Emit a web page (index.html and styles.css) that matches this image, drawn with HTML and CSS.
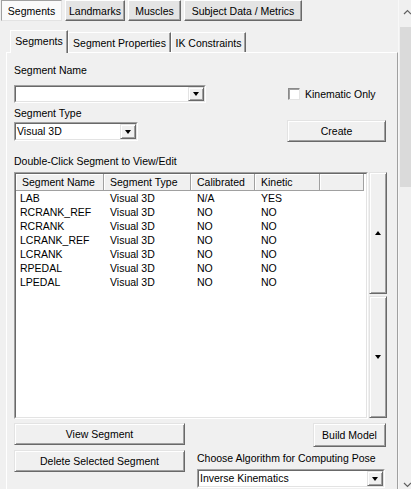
FILE: index.html
```html
<!DOCTYPE html>
<html>
<head>
<meta charset="utf-8">
<link rel="stylesheet" href="styles.css">
</head>
<body>
<div class="window">
  <div class="main">
    <div class="toptabs">
      <div class="ttab sel t1">Segments</div>
      <div class="ttab t2">Landmarks</div>
      <div class="ttab t3">Muscles</div>
      <div class="ttab t4">Subject Data / Metrics</div>
    </div>
    <div class="tabctl">
      <div class="tabstrip">
        <div class="tab sel s1">Segments</div>
        <div class="tab s2">Segment Properties</div>
        <div class="tab s3">IK Constraints</div>
      </div>
      <div class="panel">
        <div class="lbl">Segment Name</div>
        <div class="row1">
          <div class="combo cw1"><div class="combo-in"><span class="ctext"></span><span class="dd"><i class="tri-down"></i></span></div></div>
          <label class="check"><span class="box"></span><span>Kinematic Only</span></label>
        </div>
        <div class="lbl l2">Segment Type</div>
        <div class="row2">
          <div class="combo cw2"><div class="combo-in"><span class="ctext">Visual 3D</span><span class="dd"><i class="tri-down"></i></span></div></div>
          <div class="btn create">Create</div>
        </div>
        <div class="lbl l3">Double-Click Segment to View/Edit</div>
        <div class="listrow">
          <div class="list">
            <div class="list-in">
              <div class="lhead">
                <div class="hc">Segment Name</div>
                <div class="hc">Segment Type</div>
                <div class="hc">Calibrated</div>
                <div class="hc">Kinetic</div>
                <div class="hc"></div>
              </div>
              <div class="lrow"><span>LAB</span><span>Visual 3D</span><span>N/A</span><span>YES</span></div>
              <div class="lrow"><span>RCRANK_REF</span><span>Visual 3D</span><span>NO</span><span>NO</span></div>
              <div class="lrow"><span>RCRANK</span><span>Visual 3D</span><span>NO</span><span>NO</span></div>
              <div class="lrow"><span>LCRANK_REF</span><span>Visual 3D</span><span>NO</span><span>NO</span></div>
              <div class="lrow"><span>LCRANK</span><span>Visual 3D</span><span>NO</span><span>NO</span></div>
              <div class="lrow"><span>RPEDAL</span><span>Visual 3D</span><span>NO</span><span>NO</span></div>
              <div class="lrow"><span>LPEDAL</span><span>Visual 3D</span><span>NO</span><span>NO</span></div>
            </div>
          </div>
          <div class="scrollcol">
            <div class="btn sbtn"><i class="tri-up"></i></div>
            <div class="btn sbtn"><i class="tri-down"></i></div>
          </div>
        </div>
        <div class="bottom">
          <div class="bleft">
            <div class="btn bb">View Segment</div>
            <div class="btn bb">Delete Selected Segment</div>
          </div>
          <div class="bright">
            <div class="btn build">Build Model</div>
            <div class="lbl l4">Choose Algorithm for Computing Pose</div>
            <div class="combo cw3"><div class="combo-in"><span class="ctext">Inverse Kinematics</span><span class="dd"><i class="tri-down"></i></span></div></div>
          </div>
        </div>
      </div>
    </div>
  </div>
  <div class="vscroll">
    <div class="sb-arrow sb-up"><svg width="9" height="6" viewBox="0 0 9 6"><polyline points="1,5 4.5,1.5 8,5" fill="none" stroke="#606060" stroke-width="1.2"/></svg></div>
    <div class="thumb"></div>
    <div class="sb-arrow sb-down"><svg width="9" height="6" viewBox="0 0 9 6"><polyline points="1,1 4.5,4.5 8,1" fill="none" stroke="#606060" stroke-width="1.2"/></svg></div>
  </div>
</div>
</body>
</html>
```
FILE: styles.css
```css
* { box-sizing: border-box; }
html, body { margin: 0; padding: 0; }
body {
  background: #f0f0f0;
  font-family: "Liberation Sans", Arial, sans-serif;
  font-size: 10.5px;
  color: #000;
  overflow: hidden;
}
.window { display: flex; width: 415px; height: 494px; }
.main { width: 398px; flex: none; }

/* top level button tabs */
.toptabs { display: flex; gap: 3px; padding-left: 1px; height: 21px; }
.ttab {
  height: 21px;
  display: flex; align-items: center; justify-content: center;
  background: #e4e4e4;
  border: 1px solid;
  border-color: #fff #696969 #696969 #fff;
  box-shadow: inset -1px -1px #a0a0a0;
  white-space: nowrap;
}
.ttab.sel {
  background: #fafafa;
  border-color: #a0a0a0 #e3e3e3 #e3e3e3 #a0a0a0;
  box-shadow: none;
}
.t1 { width: 61px; }
.t2 { width: 60px; }
.t3 { width: 53px; }
.t4 { width: 118px; }

/* second level tab control */
.tabctl { margin: 9px 0 0 6px; width: 392px; }
.tabstrip { display: flex; align-items: flex-end; height: 22px; padding-left: 4px; }
.tab {
  height: 20px;
  display: flex; align-items: center; justify-content: center;
  border: 1px solid;
  border-bottom: none;
  border-color: #fff #696969 transparent #fff;
  box-shadow: inset -1px 0 #a0a0a0;
  white-space: nowrap;
}
.tab.sel { height: 23px; margin-bottom: -1px; position: relative; z-index: 1; background: #f0f0f0; padding-bottom: 2px; }
.s1 { width: 58px; }
.s2 { width: 103px; }
.s3 { width: 75px; }

.panel {
  border-top: 1px solid #fff;
  border-left: 1px solid #fff;
  border-right: 1px solid #a0a0a0;
  height: 445px;
  padding: 11px 0 0 7px;
}

.lbl { height: 13px; line-height: 13px; white-space: nowrap; }
.l2 { margin-top: 4px; }
.l3 { margin-top: 13px; }

.row1 { display: flex; align-items: center; height: 18px; margin-top: 8px; }
.row2 { display: flex; align-items: flex-start; height: 22px; }

/* combo box */
.combo {
  display: flex;
  background: #fff;
  border: 1px solid;
  border-color: #a0a0a0 #fff #fff #a0a0a0;
}
.combo-in {
  flex: 1;
  display: flex;
  border: 1px solid;
  border-color: #696969 #e3e3e3 #e3e3e3 #696969;
}
.ctext { flex: 1; padding-left: 1px; line-height: 15px; white-space: nowrap; }
.dd {
  width: 16px; flex: none;
  display: flex; align-items: center; justify-content: center;
  background: #f0f0f0;
  border: 1px solid;
  border-color: #e3e3e3 #696969 #696969 #e3e3e3;
  box-shadow: inset 1px 1px #fff, inset -1px -1px #a0a0a0;
}
.cw1 { width: 192px; height: 18px; }
.cw2 { width: 124px; height: 19px; margin-top: 2px; }
.cw3 { width: 188px; height: 19px; margin-top: 4px; }

.tri-down {
  display: block; width: 0; height: 0;
  border-left: 3.5px solid transparent;
  border-right: 3.5px solid transparent;
  border-top: 4px solid #000;
}
.tri-up {
  display: block; width: 0; height: 0;
  border-left: 3.5px solid transparent;
  border-right: 3.5px solid transparent;
  border-bottom: 4px solid #000;
}

/* checkbox */
.check { display: flex; align-items: center; gap: 5px; margin-left: 82px; white-space: nowrap; }
.box {
  width: 12px; height: 12px;
  background: #fff;
  border: 1px solid;
  border-color: #8a8a8a #e3e3e3 #e3e3e3 #8a8a8a;
  box-shadow: inset 1px 1px #a0a0a0;
}

/* buttons */
.btn {
  display: flex; align-items: center; justify-content: center;
  background: #f0f0f0;
  border: 1px solid;
  border-color: #e3e3e3 #696969 #696969 #e3e3e3;
  box-shadow: inset 1px 1px #fff, inset -1px -1px #a0a0a0;
  white-space: nowrap;
}
.create { width: 99px; height: 22px; margin-left: 149px; }

/* list view */
.listrow { display: flex; gap: 1px; margin-top: 4px; }
.list {
  width: 354px; height: 247px;
  border: 1px solid;
  border-color: #a0a0a0 #fff #fff #a0a0a0;
}
.list-in {
  height: 100%;
  background: #fff;
  border: 1px solid;
  border-color: #696969 #e3e3e3 #e3e3e3 #696969;
}
.lhead, .lrow { display: grid; grid-template-columns: 88px 87px 64px 65px 44px; }
.hc {
  height: 17px; line-height: 16px;
  background: #f0f0f0;
  border-right: 1px solid #a0a0a0;
  border-bottom: 1px solid #a0a0a0;
  box-shadow: inset 1px 1px #fff;
  padding-left: 6px;
  white-space: nowrap;
}
.lrow span { line-height: 14px; height: 14px; padding-left: 6px; white-space: nowrap; }
.lrow span:first-child { padding-left: 4px; }

.scrollcol { display: flex; flex-direction: column; gap: 2px; width: 18px; }
.sbtn { width: 18px; height: 122px; }

/* bottom */
.bottom { display: grid; grid-template-columns: 171px 188px; column-gap: 12px; margin-top: 4px; }
.bleft { display: flex; flex-direction: column; gap: 5px; }
.bb { height: 22px; }
.bright { display: flex; flex-direction: column; }
.build { width: 73px; height: 24px; align-self: flex-end; margin-right: -1px; }
.l4 { margin-top: 5px; }

/* window scrollbar */
.vscroll {
  width: 17px; flex: none;
  position: relative;
  background: #f0f0f0;
  border-left: 1px solid #f8f8f8;
}
.sb-arrow { position: absolute; left: 4px; width: 9px; height: 6px; }
.sb-arrow svg { display: block; }
.sb-up { top: 9px; }
.sb-down { top: 482px; }
.thumb {
  position: absolute;
  left: 1px; top: 27px;
  width: 13px; height: 160px;
  background: #dadada;
}
```
